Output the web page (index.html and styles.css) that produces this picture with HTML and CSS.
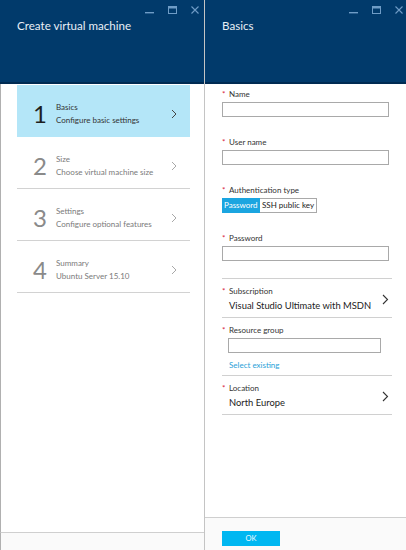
FILE: index.html
```html
<!DOCTYPE html>
<html>
<head>
<meta charset="utf-8">
<link rel="stylesheet" href="styles.css">
</head>
<body>
<div class="app">
  <section class="blade blade-left">
    <header class="blade-head">
      <div class="controls">
        <svg class="ctl" width="9" height="8" viewBox="0 0 9 8"><rect x="0" y="6" width="9" height="1.4" fill="currentColor"/></svg>
        <svg class="ctl" width="9" height="8" viewBox="0 0 9 8"><rect x="0.5" y="0.5" width="8" height="7" fill="none" stroke="currentColor"/><rect x="0.5" y="0.5" width="8" height="2" fill="currentColor"/></svg>
        <svg class="ctl" width="8" height="8" viewBox="0 0 8 8"><path d="M0.5 0.5 L7.5 7.5 M7.5 0.5 L0.5 7.5" stroke="currentColor" stroke-width="1.1"/></svg>
      </div>
      <h1 class="title">Create virtual machine</h1>
    </header>
    <div class="blade-body left-body">
      <ul class="steps">
        <li class="step active">
          <span class="num">1</span>
          <div class="step-text"><div class="step-name">Basics</div><div class="step-desc">Configure basic settings</div></div>
          <svg class="chev" width="6" height="10" viewBox="0 0 6 10"><polyline points="1,1 5,5 1,9" fill="none" stroke="currentColor" stroke-width="1"/></svg>
        </li>
        <li class="step">
          <span class="num">2</span>
          <div class="step-text"><div class="step-name">Size</div><div class="step-desc">Choose virtual machine size</div></div>
          <svg class="chev" width="6" height="10" viewBox="0 0 6 10"><polyline points="1,1 5,5 1,9" fill="none" stroke="currentColor" stroke-width="1"/></svg>
        </li>
        <li class="step">
          <span class="num">3</span>
          <div class="step-text"><div class="step-name">Settings</div><div class="step-desc">Configure optional features</div></div>
          <svg class="chev" width="6" height="10" viewBox="0 0 6 10"><polyline points="1,1 5,5 1,9" fill="none" stroke="currentColor" stroke-width="1"/></svg>
        </li>
        <li class="step">
          <span class="num">4</span>
          <div class="step-text"><div class="step-name">Summary</div><div class="step-desc">Ubuntu Server 15.10</div></div>
          <svg class="chev" width="6" height="10" viewBox="0 0 6 10"><polyline points="1,1 5,5 1,9" fill="none" stroke="currentColor" stroke-width="1"/></svg>
        </li>
      </ul>
    </div>
    <footer class="blade-foot left-foot"></footer>
  </section>

  <section class="blade blade-right">
    <header class="blade-head">
      <div class="controls controls-right">
        <svg class="ctl" width="9" height="8" viewBox="0 0 9 8"><rect x="0" y="6" width="9" height="1.4" fill="currentColor"/></svg>
        <svg class="ctl" width="9" height="8" viewBox="0 0 9 8"><rect x="0.5" y="0.5" width="8" height="7" fill="none" stroke="currentColor"/><rect x="0.5" y="0.5" width="8" height="2" fill="currentColor"/></svg>
        <svg class="ctl" width="8" height="8" viewBox="0 0 8 8"><path d="M0.5 0.5 L7.5 7.5 M7.5 0.5 L0.5 7.5" stroke="currentColor" stroke-width="1.1"/></svg>
      </div>
      <h1 class="title">Basics</h1>
    </header>
    <div class="blade-body form">
      <div class="field">
        <div class="label"><span class="req">*</span>Name</div>
        <div class="input"></div>
      </div>
      <div class="field">
        <div class="label"><span class="req">*</span>User name</div>
        <div class="input"></div>
      </div>
      <div class="field">
        <div class="label"><span class="req">*</span>Authentication type</div>
        <div class="toggle"><span class="opt on">Password</span><span class="opt">SSH public key</span></div>
      </div>
      <div class="field field-last">
        <div class="label"><span class="req">*</span>Password</div>
        <div class="input"></div>
      </div>

      <div class="section row-section">
        <div class="section-main">
          <div class="label label-in"><span class="req">*</span>Subscription</div>
          <div class="value">Visual Studio Ultimate with MSDN</div>
        </div>
        <svg class="chev chev-dark" width="7" height="11" viewBox="0 0 7 11"><polyline points="1,1 5.5,5.5 1,10" fill="none" stroke="currentColor" stroke-width="1.1"/></svg>
      </div>
      <div class="section rg-section">
        <div class="label label-in"><span class="req">*</span>Resource group</div>
        <div class="input input-rg"></div>
        <div class="link">Select existing</div>
      </div>
      <div class="section row-section loc-section">
        <div class="section-main">
          <div class="label label-in"><span class="req">*</span>Location</div>
          <div class="value">North Europe</div>
        </div>
        <svg class="chev chev-dark" width="7" height="11" viewBox="0 0 7 11"><polyline points="1,1 5.5,5.5 1,10" fill="none" stroke="currentColor" stroke-width="1.1"/></svg>
      </div>
    </div>
    <footer class="blade-foot right-foot">
      <button class="ok">OK</button>
    </footer>
  </section>
</div>
</body>
</html>
```

FILE: styles.css
```css
html, body {
  margin: 0;
  padding: 0;
  background: #ffffff;
}

body {
  font-family: Lato, "Noto Sans", sans-serif;
  color: #333333;
}

.app {
  display: flex;
  width: 406px;
  height: 550px;
  overflow: hidden;
}

.blade {
  display: flex;
  flex-direction: column;
  height: 550px;
  box-sizing: border-box;
}

.blade-left {
  width: 205px;
  border-right: 1px solid #c4c4c4;
}

.blade-right {
  width: 201px;
}

.blade-head {
  height: 84px;
  box-sizing: border-box;
  background: #013a6b;
  border-bottom: 2px solid #002b52;
  display: flex;
  flex-direction: column;
}

.controls {
  height: 18px;
  box-sizing: border-box;
  display: flex;
  justify-content: flex-end;
  align-items: flex-start;
  gap: 14px;
  padding: 6px 5px 0 0;
  color: #6f9cc6;
}

.controls-right {
  padding-right: 3px;
}

.ctl {
  display: block;
}

.title {
  margin: 0;
  padding-left: 17px;
  font-size: 11.6px;
  line-height: 16px;
  font-weight: normal;
  color: #e8eff6;
}

.blade-body {
  flex: 1;
  box-sizing: border-box;
}

.left-body {
  border-left: 1px solid #b0b0b0;
}

.steps {
  list-style: none;
  margin: 0;
  padding: 1px 14px 0 16px;
}

.step {
  height: 52px;
  box-sizing: border-box;
  display: flex;
  align-items: center;
  padding: 6px 13px 0 16px;
  border-bottom: 1px solid #d2d2d2;
  color: #7a7a7a;
}

.step.active {
  background: #b4e6f8;
  border-bottom-color: #b4e6f8;
  color: #333333;
}

.num {
  width: 23px;
  flex: none;
  font-size: 24px;
  line-height: 24px;
  color: #8a8a8a;
}

.step.active .num {
  color: #1e1e1e;
}

.step-text {
  flex: 1;
  font-size: 8px;
  line-height: 13px;
}

.chev {
  display: block;
  flex: none;
  color: #a8a8a8;
}

.step.active .chev {
  color: #444444;
}

.blade-foot {
  box-sizing: border-box;
  background: #fafafa;
  border-top: 1px solid #cfcfcf;
}

.left-foot {
  height: 18px;
  border-left: 1px solid #b0b0b0;
}

.right-foot {
  height: 33px;
  padding: 13px 0 0 17px;
}

.form {
  padding: 5px 14px 0 17px;
}

.field {
  margin-bottom: 20px;
}

.field-last {
  margin-bottom: 17px;
}

.label {
  font-size: 8px;
  line-height: 11px;
  color: #333333;
  margin-bottom: 2px;
  white-space: nowrap;
}

.req {
  color: #d8213b;
  display: inline-block;
  width: 7px;
}

.input {
  width: 167px;
  height: 15px;
  box-sizing: border-box;
  border: 1px solid #a9a9a9;
  background: #ffffff;
}

.toggle {
  display: flex;
  height: 15px;
}

.opt {
  box-sizing: border-box;
  width: 57px;
  height: 15px;
  font-size: 8px;
  line-height: 13px;
  padding: 0 2px;
  border: 1px solid #a9a9a9;
  border-left: none;
  color: #222222;
  background: #ffffff;
  white-space: nowrap;
}

.opt.on {
  width: 38px;
  background: #1ba5e0;
  border-color: #1ba5e0;
  color: #ffffff;
}

.section {
  border-top: 1px solid #d0d0d0;
  padding: 7px 0 0 0;
}

.row-section {
  display: flex;
  align-items: center;
  padding-bottom: 5px;
  padding-right: 3px;
}

.loc-section {
  border-bottom: 1px solid #d0d0d0;
}

.section-main {
  flex: 1;
}

.label-in {
  margin-bottom: 0;
}

.value {
  font-size: 9.4px;
  line-height: 13px;
  margin-top: 2px;
  color: #222222;
  padding-left: 7px;
  white-space: nowrap;
}

.chev-dark {
  color: #333333;
}

.rg-section {
  padding-bottom: 4px;
}

.input-rg {
  width: 153px;
  margin: 2px 0 0 6px;
}

.link {
  font-size: 8px;
  line-height: 11px;
  color: #2a9fd8;
  padding: 7px 0 0 7px;
}

.ok {
  display: block;
  width: 58px;
  height: 15px;
  padding: 0;
  border: none;
  background: #00b7f1;
  color: #f4fbff;
  font-family: Lato, "Noto Sans", sans-serif;
  font-size: 7.5px;
  line-height: 15px;
  text-align: center;
}
```
